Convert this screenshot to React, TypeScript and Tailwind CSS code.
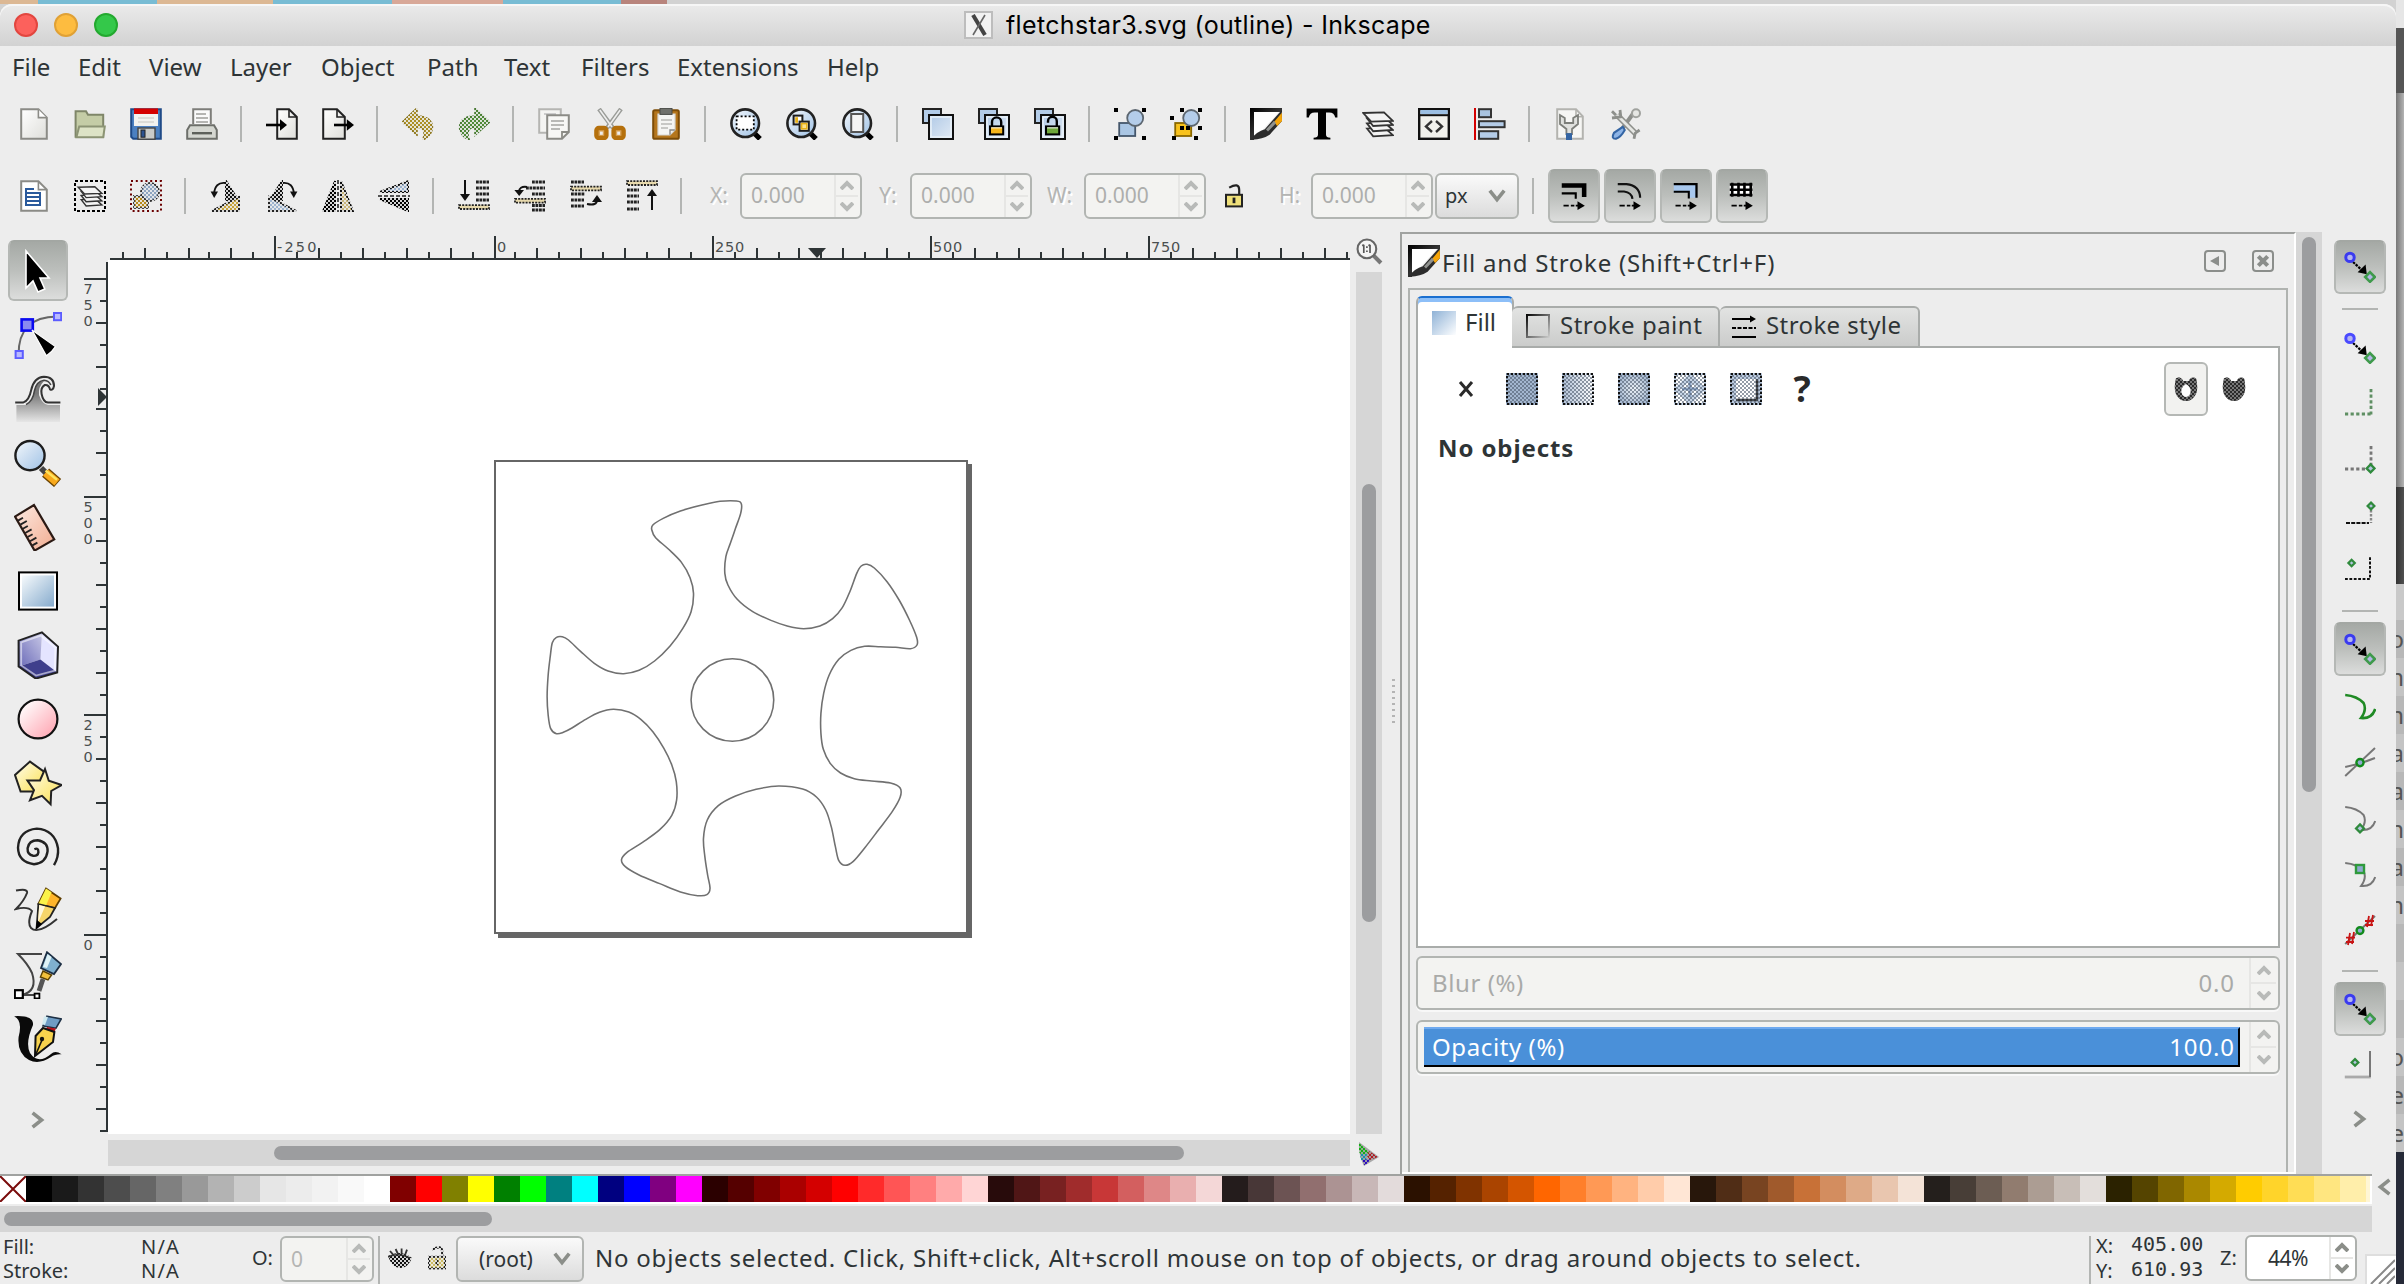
import React from "react";

type Kids = { children?: React.ReactNode };

/* ---------- shared pieces ---------- */

function Ic({ children, dim, cls }: Kids & { dim?: boolean; cls?: string }) {
  return (
    <svg viewBox="0 0 16 16" className={cls ?? "h-8 w-8 shrink-0"} fill="none">
      <g mask={dim ? "url(#stipple)" : undefined}>{children}</g>
    </svg>
  );
}

function Cell({ children }: Kids) {
  return <div className="flex w-14 shrink-0 items-center justify-center">{children}</div>;
}

function Sep() {
  return (
    <div className="flex w-6 shrink-0">
      <div className="ml-[10px] h-9 w-[2px] bg-[#b3b5b3]" />
    </div>
  );
}

function Spin({ tone, width }: { tone: string; width?: string }) {
  return (
    <div className={`flex h-full shrink-0 flex-col border-l-2 border-[#e6e6e4] pr-[2px] ${width ?? "w-[26px]"}`}>
      <div className="flex flex-1 items-center justify-center border-b-2 border-[#e6e6e4]">
        <svg viewBox="0 0 14 10" className="h-[10px] w-[14px]" fill="none" stroke={tone} strokeWidth="4">
          <path d="M1 9L7 3L13 9" />
        </svg>
      </div>
      <div className="flex flex-1 items-center justify-center">
        <svg viewBox="0 0 14 10" className="h-[10px] w-[14px]" fill="none" stroke={tone} strokeWidth="4">
          <path d="M1 1L7 7L13 1" />
        </svg>
      </div>
    </div>
  );
}

function NumberField({ label, lw, value, width }: { label: string; lw: string; value: string; width: string }) {
  return (
    <div className="flex items-center">
      <span className={`text-[21px] text-[#b4b5b3] [text-shadow:2px_2px_0_#fff] ${lw}`}>{label}</span>
      <div className={`flex h-[46px] items-center rounded-md border-2 border-[#b2b5b2] bg-[#f3f3f1] ${width}`}>
        <span className="flex-1 pl-[9px] text-[21px] text-[#adaeac]">{value}</span>
        <Spin tone="#b8bab8" />
      </div>
    </div>
  );
}

function Chevron({ d, cls }: { d: string; cls: string }) {
  return (
    <svg viewBox="0 0 20 20" className={cls} fill="none" stroke="#8b8e89" strokeWidth="4">
      <path d={d} />
    </svg>
  );
}

/* ---------- command bar icons ---------- */

const NewIcon = () => (
  <Ic>
    <path d="M1.6 .6H10.2L14.4 4.8V15.4H1.6Z" fill="url(#paper)" stroke="#8b8b86" />
    <path d="M10.2 .8V4.8H14.2" fill="#fff" stroke="#8b8b86" strokeWidth=".8" />
  </Ic>
);
const OpenIcon = () => (
  <Ic>
    <path d="M.8 14.4V1.6H6L7 3.4H14.6V14.4Z" fill="#c4cca6" stroke="#7f8669" />
    <path d="M2.6 9.2H15.4L14.6 14.6H1.2Z" fill="#dde3c6" stroke="#8c9474" />
  </Ic>
);
const SaveIcon = () => (
  <Ic>
    <path d="M.6 .6H15.4V15.4H1.6L.6 14.4Z" fill="#4b80c1" stroke="#1f4a87" />
    <rect x="2" y=".2" width="12" height="3" fill="#d40000" />
    <rect x="2" y="3" width="12" height="6" fill="#f2f2ef" />
    <path d="M4 5H12M4 7H12" stroke="#dcdcd8" />
    <rect x="4" y="10" width="8.5" height="5.6" fill="#c9cbc9" stroke="#444" strokeWidth=".7" />
    <rect x="5.5" y="11" width="2" height="3.6" fill="#2b5290" stroke="#222" strokeWidth=".5" />
  </Ic>
);
const PrintIcon = () => (
  <Ic>
    <path d="M3.6 8V.6H12.4V8" fill="#fafafa" stroke="#7d7d79" />
    <path d="M5 3H10M5 5H11M5 7H11" stroke="#b5b5b2" />
    <path d="M2 8.6H14L15.4 11V15.4H.6V11Z" fill="#d5d7d1" stroke="#6d6f6a" />
    <path d="M3 12.6H13" stroke="#5d605a" strokeWidth="1.2" />
  </Ic>
);
const ImportIcon = () => (
  <Ic>
    <path d="M5.6 .6H11.5L15.4 4.5V15.4H5.6Z" fill="url(#paper)" stroke="#222" />
    <path d="M11.5 .6V4.5H15.4" stroke="#222" strokeWidth=".8" />
    <path d="M0 8.5H8" stroke="#000" strokeWidth="1.3" />
    <path d="M7 5.6L10.5 8.5L7 11.4Z" fill="#000" />
  </Ic>
);
const ExportIcon = () => (
  <Ic>
    <path d="M.6 .6H7.5L11.4 4.5V15.4H.6Z" fill="url(#paper)" stroke="#222" />
    <path d="M7.5 .6V4.5H11.4" stroke="#222" strokeWidth=".8" />
    <path d="M6 8.5H13" stroke="#000" strokeWidth="1.3" />
    <path d="M12.4 5.6L16 8.5L12.4 11.4Z" fill="#000" />
  </Ic>
);
const UndoIcon = () => (
  <Ic dim>
    <path d="M7.5 0L.2 7L7.5 13.6V9.6C11 9.6 11.8 12 10.4 16C15 14 16.6 9 13.8 6C12.2 4.3 10 4 7.5 4Z" fill="#ab8f24" stroke="#8f7a24" strokeWidth=".8" />
  </Ic>
);
const RedoIcon = () => (
  <Ic dim>
    <path d="M8.5 0L15.8 7L8.5 13.6V9.6C5 9.6 4.2 12 5.6 16C1 14 -.6 9 2.2 6C3.8 4.3 6 4 8.5 4Z" fill="#4f8a38" stroke="#4a7a34" strokeWidth=".8" />
  </Ic>
);
const CopyIcon = () => (
  <Ic>
    <path d="M.6 .6H11.4V12.4H.6Z" fill="#f4f4f2" stroke="#b5b5b2" />
    <path d="M3 3H9" stroke="#ccc" />
    <path d="M4.6 3.6H15.4V12L12 15.4H4.6Z" fill="#f7f7f5" stroke="#8b8b86" />
    <path d="M6.5 6.5H13M6.5 8.5H13M6.5 10.5H11" stroke="#b9b9b6" strokeWidth=".9" />
    <path d="M12 15.2V12H15.2" stroke="#8b8b86" strokeWidth=".9" />
  </Ic>
);
const CutIcon = () => (
  <Ic>
    <path d="M2.5 .5L9.5 10M13.5 .5L6.5 10" stroke="#9a9c98" strokeWidth="2.2" />
    <path d="M2.9 1L9 9.5M13.1 1L7 9.5" stroke="#eee" strokeWidth=".8" />
    <rect x="1.2" y="10" width="5" height="5" rx="1.2" fill="#d8a45c" stroke="#b5700c" strokeWidth="2.2" />
    <rect x="9.8" y="10" width="5" height="5" rx="1.2" fill="#d8a45c" stroke="#b5700c" strokeWidth="2.2" />
    <rect x="3" y="11.8" width="1.4" height="1.6" fill="#ededed" />
    <rect x="11.6" y="11.8" width="1.4" height="1.6" fill="#ededed" />
  </Ic>
);
const PasteIcon = () => (
  <Ic>
    <rect x="1.6" y="1.1" width="12.8" height="14.3" rx=".8" fill="#b5761d" stroke="#7d4c07" />
    <path d="M4 3H12.5V11L10 13.5H4Z" fill="#f5f5f3" stroke="#d8d8d5" strokeWidth=".6" />
    <path d="M5.5 6H11M5.5 8H11M5.5 10H9" stroke="#b9b9b6" strokeWidth=".8" />
    <rect x="5" y=".2" width="6" height="3" fill="#6f716c" stroke="#4a4c48" strokeWidth=".5" />
    <path d="M10 13.4V11H12.4" stroke="#888" strokeWidth=".7" />
  </Ic>
);
const Lens = ({ children }: Kids) => (
  <Ic>
    <path d="M11.5 12L15 15.4" stroke="#000" strokeWidth="2.6" />
    <circle cx="7.6" cy="7.6" r="6.9" fill="url(#glass)" stroke="#222" strokeWidth="1.3" />
    {children}
  </Ic>
);
const ZoomSel = () => (
  <Lens>
    <rect x="3.3" y="4.2" width="8.6" height="6.6" fill="#fff" stroke="#000" strokeDasharray="1 1" strokeWidth=".9" />
  </Lens>
);
const ZoomDraw = () => (
  <Lens>
    <rect x="3.8" y="3.8" width="4.4" height="4.4" fill="#fff" stroke="#1c1c1c" />
    <rect x="4.6" y="4.6" width="1.4" height="2.8" fill="#e9b116" />
    <rect x="6.8" y="6.8" width="4.6" height="4.6" fill="#fff" stroke="#1c1c1c" />
    <rect x="7.8" y="7.8" width="2.6" height="2.6" fill="#fde08a" stroke="#e9b116" strokeWidth=".8" />
  </Lens>
);
const ZoomPage = () => (
  <Lens>
    <rect x="4.6" y="3" width="6" height="9" fill="#f4f4f4" stroke="#555" />
  </Lens>
);
const Dup = ({ children }: Kids) => (
  <Ic>
    <rect x=".5" y=".5" width="9" height="7" fill="#b3cce8" stroke="#222" />
    <rect x="3.5" y="3.5" width="12" height="12" fill="url(#blue)" stroke="#111" />
    <rect x="4.5" y="4.5" width="10" height="10" stroke="#e8f0f8" strokeWidth=".8" />
    {children}
  </Ic>
);
const Lock = ({ color, open }: { color: string; open?: boolean }) => (
  <g>
    <path d={open ? "M7 7.4V6.6A2.2 2.2 0 0 1 11.4 6.6V9" : "M7 9.5V7A2.3 2.3 0 0 1 11.6 7V9.5"} stroke="#000" strokeWidth="1.2" />
    <rect x="6" y="9.2" width="6.6" height="4" fill={color} stroke="#000" />
    <path d="M6.600 9.900H12" stroke="#fff" strokeOpacity=".7" strokeWidth=".7" />
  </g>
);
const Group = ({ un }: { un?: boolean }) => (
  <Ic>
    <rect x="2.6" y="7.5" width="8" height="6.5" fill={un ? "#f8c21c" : "#aac6e4"} stroke={un ? "#8a6800" : "#44566b"} strokeWidth=".9" />
    <circle cx="10.6" cy="5" r="4" fill="#b4cdea" stroke="#5c6670" strokeWidth=".9" />
    {(un
      ? [[5, 0], [14, 0], [0, 4], [5, 9], [8, 9], [14, 9], [1, 14], [12, 14]]
      : [[0, 0], [14, 0], [0, 14], [14, 14]]
    ).map(([x, y]) => (
      <rect key={`${x}-${y}`} x={x} y={y} width="2" height="2" fill="#000" />
    ))}
  </Ic>
);
const FillStroke = ({ cls }: { cls?: string }) => (
  <Ic cls={cls}>
    <path d="M0 0H16V2H2V16H0Z" fill="url(#ink)" />
    <path d="M2 2H14.500L2 15.500Z" fill="#fff" />
    <path d="M15.900 1L7.400 10.600Q3.500 11.600 .2 15.800Q6 16 9.800 13.400L16 6.500Z" fill="#2c2c2c" />
    <path d="M15.900 2.400L12 7L13.600 9L16 6.500Z" fill="#f5a50a" />
    <path d="M8 10.800L12 6.400L13 7.600L9 11.800Z" fill="#8f918e" />
  </Ic>
);
const TextIcon = () => (
  <Ic>
    <path d="M.3 .3H15.7V4.8H14.6Q14.2 2.2 11.6 2.2H10V13.2Q10 14.8 12.2 14.9V15.8H3.8V14.9Q6 14.8 6 13.2V2.2H4.4Q1.8 2.2 1.4 4.8H.3Z" fill="#000" />
  </Ic>
);
const Layers = () => (
  <g stroke="#333" strokeWidth=".9" fill="#f4f4f4">
    <path d="M2.5 10.3L11 9.6L15.4 13.6L5.6 14.2Z" />
    <path d="M2.5 7.7L11 7L15.4 11L5.6 11.6Z" />
    <path d="M2.5 5.1L11 4.4L15.4 8.4L5.6 9Z" />
    <path d="M.6 2.5L11 2.2L15.4 6.4L4.6 6.8Z" />
  </g>
);
const XmlIcon = () => (
  <Ic>
    <rect x=".6" y=".6" width="14.8" height="14.8" fill="#f1f1ec" stroke="#111" strokeWidth="1.2" />
    <rect x="1.2" y="1" width="13.6" height="2" fill="#9cbfe2" />
    <path d="M1 3.6H15" stroke="#111" />
    <path d="M7 6.5L4 9.2L7 12M9 6.5L12 9.2L9 12" stroke="#333" strokeWidth="1.2" />
  </Ic>
);
const AlignIcon = () => (
  <Ic>
    <path d="M.5 0V16" stroke="#d40000" />
    <rect x="2.5" y=".6" width="6" height="4" fill="#a9c3df" stroke="#333" />
    <rect x="2.5" y="6.6" width="12.8" height="3" fill="#b4cce8" stroke="#333" />
    <rect x="2.5" y="11.6" width="9.6" height="3.8" fill="#b4cce8" stroke="#333" />
  </Ic>
);
const DocPrefs = () => (
  <Ic>
    <path d="M1.6 .6H11L14.4 4.2V15.4H1.6Z" fill="#f6f6f4" stroke="#b3b3af" />
    <path d="M11 .8V4.400H14.200" stroke="#b3b3af" strokeWidth=".8" />
    <path d="M3 3.500V8L6.200 10.500V13H9V10.500L12 8V3.500L9.600 5V7.500H5.400V5Z" fill="#e0e1de" stroke="#7d7f7a" strokeWidth=".9" />
    <rect x="6" y="12.6" width="3" height="3.4" fill="#3465a4" />
  </Ic>
);
const Prefs = () => (
  <Ic>
    <path d="M12.5 1.5L6 10.5" stroke="#8d8f8b" strokeWidth="2" />
    <path d="M3.5 3.5L13 13" stroke="#8d8f8b" strokeWidth="3" />
    <path d="M3.5 3.5L13 13" stroke="#e6e7e4" strokeWidth="1.4" />
    <path d="M1 1.6L3 3.6M5 1L5.4 4.4L1 5" stroke="#8d8f8b" strokeWidth="1.4" />
    <path d="M14.8 11L12.6 12.6L12 15.4" stroke="#8d8f8b" strokeWidth="1.4" />
    <circle cx="13" cy="2.6" r="2" fill="#e6e7e4" stroke="#a0a29e" />
    <path d="M6.4 9.4L2 12.4Q.4 15.6 3 15.4Q5.4 14.6 7.4 11Z" fill="#8db4e6" stroke="#3465a4" />
  </Ic>
);

/* ---------- tool control icons ---------- */

const SelAll = () => (
  <Ic>
    <path d="M1.6 .6H10.2L14.4 4.8V15.4H1.6Z" fill="#fff" stroke="#8b8b86" />
    <path d="M10.2 .8V4.8H14.2" stroke="#8b8b86" strokeWidth=".8" />
    <path d="M3.5 4.5H8M3.5 6.5H11.5M3.5 8.5H11.5M3.5 10.5H11.5M3.5 12.5H11.5M4 4V13M11 6V13" stroke="#2a5a9c" />
  </Ic>
);
const SelLayers = () => (
  <Ic>
    <rect x=".5" y=".5" width="15" height="15" stroke="#000" strokeDasharray="1.5 1" />
    <g transform="translate(1.6 1.6) scale(.8)">
      <Layers />
    </g>
  </Ic>
);
const Desel = () => (
  <Ic>
    <rect x=".5" y=".5" width="15" height="15" stroke="#6b0000" strokeDasharray="1 1.4" />
    <g mask="url(#stipple)">
      <path d="M2 8H9V14H2Z" fill="#b58a1c" stroke="#444" />
      <circle cx="10" cy="6" r="4.5" fill="#8da4bf" stroke="#333" />
    </g>
  </Ic>
);
const RotL = () => (
  <Ic>
    <g mask="url(#stipple)">
      <path d="M8 .5V10L14 10Z" fill="#111" stroke="#111" />
      <path d="M1 15.5L14.5 8.5L14.5 15.5Z" fill="#c5a33a" stroke="#222" />
    </g>
    <path d="M7.5 1.5Q2.5 1 2 7" stroke="#111" strokeWidth=".9" />
    <path d="M.3 5.8H4L2.1 9Z" fill="#111" />
  </Ic>
);
const RotR = () => (
  <Ic>
    <g mask="url(#stipple)">
      <path d="M8 .5V10L2 10Z" fill="#111" stroke="#111" />
      <path d="M15 15.5L1.5 8.5L1.5 15.5Z" fill="#9db4cf" stroke="#222" />
    </g>
    <path d="M8.5 1.5Q13.5 1 14 7" stroke="#111" strokeWidth=".9" />
    <path d="M15.7 5.8H12L13.9 9Z" fill="#111" />
  </Ic>
);
const FlipH = () => (
  <Ic>
    <g mask="url(#stipple)">
      <path d="M6.5 .5V15.5H.6Z" fill="#000" stroke="#000" />
      <path d="M9.5 .5V15.5H15.4Z" fill="#c9b57a" stroke="#111" />
    </g>
    <path d="M8 0V16" stroke="#222" strokeDasharray="2 1" strokeWidth=".8" />
  </Ic>
);
const FlipV = () => (
  <Ic>
    <g mask="url(#stipple)">
      <path d="M15 9.5V15.5L1 9.5Z" fill="#000" stroke="#000" />
      <path d="M15 6V.6L1 6Z" fill="#99b0cc" stroke="#111" />
    </g>
    <path d="M0 8H16" stroke="#222" strokeDasharray="2 1" strokeWidth=".8" />
  </Ic>
);
const Stack = ({ bars, arrow, head, gold }: { bars: number[][]; arrow: string; head: string; gold: number[] }) => (
  <Ic>
    {bars.map(([x, y, w]) => (
      <path key={`${x}-${y}`} d={`M${x} ${y}h${w}`} stroke="#222" strokeWidth="1.5" strokeDasharray="1.4 .35" />
    ))}
    <path d={`M${gold[0]} ${gold[1]}h${gold[2]}v1.9h-${gold[2]}z`} fill="#e7d9ad" stroke="#222" strokeWidth=".9" strokeDasharray="1 .6" />
    <path d={arrow} stroke="#111" strokeWidth="1" />
    <path d={head} fill="#111" />
  </Ic>
);
const Padlock = ({ dim }: { dim?: boolean }) => (
  <svg viewBox="0 0 10 12" className="h-6 w-5" fill="none">
    <g mask={dim ? "url(#stipple)" : undefined}>
      <path d="M2.6 1.8Q7.6 -1 7.6 3V6" stroke="#222" strokeWidth="1.1" />
      <rect x="1" y="5.4" width="8" height="5.8" fill={dim ? "#cdbb63" : "#efe07a"} stroke="#222" />
      <path d="M5 6.8V9.6" stroke="#222" strokeWidth="1.4" />
    </g>
  </svg>
);

function Pressed({ children }: Kids) {
  return (
    <div className="flex h-[54px] w-[52px] shrink-0 items-center justify-center rounded-md border-2 border-[#b5b8b5] border-t-[#a3a7a3] bg-linear-to-b from-[#a5a9a5] via-[#bcbfbc] to-[#dcdddc]">
      {children}
    </div>
  );
}

const AffectArrow = () => (
  <>
    <path d="M2 13.5H5M6.2 13.5H8.2M9 13.5H12" stroke="#000" strokeWidth="1" />
    <path d="M10 11L14.2 13.5L10 16Z" fill="#000" />
  </>
);
const affectIcons = [
  <Ic key="stroke" cls="h-7 w-7">
    <path d="M1 2H13.8V8.5" stroke="#000" strokeWidth="2.6" />
    <path d="M1 6.5H9V9.5" stroke="#000" strokeWidth="1.2" />
    <AffectArrow />
  </Ic>,
  <Ic key="corner" cls="h-7 w-7">
    <path d="M1 1.2H6Q13.6 2 13.8 9" stroke="#111" strokeWidth="1.2" />
    <path d="M1 5.4H4.6Q9 6 9.4 9.6" stroke="#111" strokeWidth="1.2" />
    <AffectArrow />
  </Ic>,
  <Ic key="gradient" cls="h-7 w-7">
    <path d="M1 1.2H14V9H9.6V6H1Z" fill="#a8c8ee" />
    <path d="M1 1.2H14V9" stroke="#000" strokeWidth="1.3" />
    <path d="M1 5.6H9.6V9.4" stroke="#000" strokeWidth="1.2" />
    <AffectArrow />
  </Ic>,
  <Ic key="pattern" cls="h-7 w-7">
    <rect x="1" y=".8" width="13" height="7.4" fill="#fff" />
    <path d="M1 1.4H14M1 4.4H14M1 7.4H14M2.4 .4V8.4M6 .4V8.4M9.4 .4V8.4M13 .4V8.4" stroke="#000" strokeWidth="1.5" />
    <AffectArrow />
  </Ic>,
];

/* ---------- toolbox ---------- */

function Tool({ children }: Kids) {
  return (
    <div className="flex h-16 w-[60px] items-center justify-center">
      <svg viewBox="0 0 24 24" className="h-12 w-12" fill="none">
        {children}
      </svg>
    </div>
  );
}

const tools = [
  <Tool key="node">
    <path d="M2.3 22Q2 3 21.6 2.8" stroke="#666" />
    <rect x=".8" y="20" width="3.6" height="3.6" fill="#b9b9ff" stroke="#5c5cff" />
    <rect x="20" y="1" width="3.6" height="3.6" fill="#b9b9ff" stroke="#5c5cff" />
    <rect x="3.8" y="4.2" width="5.6" height="5.6" fill="#8a8af0" stroke="#0a0af0" strokeWidth="1.3" />
    <path d="M9 9.5L20.7 17.8Q19 20.6 16.2 22.4Z" fill="#000" stroke="#fff" strokeWidth=".6" />
  </Tool>,
  <Tool key="tweak">
    <path d="M1.200 15H6Q9.500 13 10 8Q11.500 3 15 3Q12 6 12.500 10Q14 14.500 17 15H23V23.500H1.200Z" fill="url(#wave)" />
    <path d="M.6 13.800H4.500Q7.500 13 8.600 7.500Q10 1.200 15 .9Q20 1 20 5.500Q19.500 8 18 7.200Q17.500 4.800 15.400 5Q13.200 6.200 13.800 9.500Q14.600 13.600 17 13.800H23.200" stroke="#333" strokeWidth="1" />
    <path d="M6 14.800Q9.500 13 10.200 8Q11 3.200 15 2.600Q17.500 2.800 18.400 5" stroke="#444" strokeWidth=".8" />
  </Tool>,
  <Tool key="zoom">
    <path d="M13.5 14.5L16 17" stroke="#444" strokeWidth="3" />
    <path d="M15.8 16.8L21.8 22" stroke="#6b4300" strokeWidth="5.4" />
    <path d="M15.8 16.8L21.5 21.7" stroke="#f8a91c" strokeWidth="4" />
    <path d="M15.8 15.8L21.5 20.4" stroke="#ffe45c" strokeWidth="1.2" />
    <circle cx="8" cy="8.3" r="7.3" fill="url(#glass)" stroke="#1d1d1d" strokeWidth="1.2" />
  </Tool>,
  <Tool key="measure">
    <path d="M10 1L20.1 18.2L10.3 23.800L.5 6.8Z" fill="url(#peach)" stroke="#2b1a14" strokeWidth="1.1" />
    <path d="M2 8.8L4.5 7.4M3.2 10.8L6.4 9M4.4 12.9L6.9 11.5M5.6 15L8.8 13.2M6.8 17L9.3 15.6M8 19.1L11.2 17.3M9.2 21.2L11.7 19.8" stroke="#222" strokeWidth=".9" />
  </Tool>,
  <Tool key="rect">
    <rect x="2.5" y="2.7" width="19" height="18.6" fill="#fff" stroke="#000" />
    <rect x="4" y="4.2" width="16" height="15.6" fill="url(#blue2)" />
  </Tool>,
  <Tool key="box">
    <path d="M14 .7L22 7.8L21.6 20.7L13.2 14.2Z" fill="#e4e4ff" />
    <path d="M14 .7L2.3 4.8V17.8L13.2 14.2Z" fill="url(#violet)" />
    <path d="M13.2 14.2L21.6 20.7L10.9 23.8L2.3 17.8Z" fill="#3f3f8c" />
    <path d="M13.300 2.300L3.600 5.700V17.200L11 22.300L20.400 19.800L20.700 8.300Z" stroke="#fff" strokeOpacity=".55" strokeWidth=".9" />
    <path d="M14 .7L22 7.8L21.6 20.7L10.9 23.8L2.3 17.8V4.8Z" stroke="#222" />
  </Tool>,
  <Tool key="ellipse">
    <circle cx="12" cy="12" r="9.7" fill="url(#pink)" stroke="#111" strokeWidth="1.1" />
  </Tool>,
  <Tool key="star">
    <path d="M8 1.3L15.5 6.7L12 16.3H3.3L.5 8Z" fill="url(#yellow)" stroke="#222" />
    <path d="M15.5 5L17.4 10.9L23.8 13L18.6 16L18.3 22.6L14 18.4L8 20.6L10 15.6L6.7 10.7L13 10.7Z" fill="url(#yellow)" stroke="#222" />
  </Tool>,
  <Tool key="spiral">
    <path d="M10.8 12.5Q12.8 11.5 12.8 14Q12.5 16 10.2 15.8Q7.2 15.2 7.4 12Q8 8 12.4 8Q17.6 8.8 17.4 13.5Q16.6 19.6 10.6 20Q2.8 19 2.6 11.8Q3 3 12 2.2Q21 2.8 22.6 12Q23 16.5 20.6 20.5" transform="translate(-.6 .6)" stroke="#222" strokeWidth="1.2" />
  </Tool>,
  <Tool key="pencil">
    <path d="M1 1.8Q7 .5 6.5 3Q5 7 1 11Q7 9.5 9 12Q6.5 18 8.5 20.5Q12 24 21.500 16" stroke="#333" />
    <path d="M16 .8L23.3 5.8L20.5 10.5L12.2 8.5Z" fill="#ffb52b" stroke="#5d3c00" strokeWidth=".9" />
    <path d="M16 .8L18.8 2.6L16 9.4L12.2 8.5Z" fill="#fbf34a" />
    <path d="M12.2 8.5L20.5 10.5L18 15L11.3 20.5Z" fill="#f7d66a" stroke="#222" strokeWidth=".9" />
    <path d="M12.6 9L15.5 9.7L12 18Z" fill="#fff7dd" />
    <path d="M11.5 16.5L14 18.5L10.8 21.5Z" fill="#000" />
  </Tool>,
  <Tool key="bezier">
    <path d="M14 1.5H2Q7 6.5 9 11Q12 20 4 22H11" stroke="#444" />
    <path d="M16.5 .6L23.5 6.5L20 11.5L13.5 8.5Z" fill="#7fb0cf" stroke="#1d2f44" strokeWidth=".9" />
    <path d="M16.8 1.5L18.8 3L16.5 8.5L14.5 8Z" fill="#dff3f7" />
    <path d="M14.5 10L18.8 12L17 14.5L13.2 13Z" fill="#f3c13c" stroke="#5d4200" strokeWidth=".7" />
    <path d="M14.5 14L12.5 20" stroke="#555" strokeWidth="2.4" />
    <rect x=".4" y="19.6" width="4" height="4" fill="#fff" stroke="#000" strokeWidth="1.1" />
    <rect x="10.3" y="21.3" width="2.4" height="2.4" fill="#fff" stroke="#000" strokeWidth=".9" />
  </Tool>,
  <Tool key="calligraphy">
    <path d="M0 .6Q10 0 9.5 5Q5.5 14 8 19Q12 25 18.5 19.5Q20.5 17.5 23.8 19.6Q20.5 19.4 18.5 21Q12.5 25 7.5 22.5Q1.5 19 2.3 11Q4.5 2.5 0 .6Z" fill="#0a0a0a" />
    <path d="M16.5 .6L23.6 2L21 6.6L14.5 5.5Z" fill="#6f9cc4" stroke="#1d2f44" strokeWidth=".8" />
    <path d="M15 .8L17 1L15.5 5L14 4.8Z" fill="#cfe9f0" />
    <path d="M16.5 6L21 6.8L20 9L16 8Z" fill="#b5121b" />
    <path d="M14.5 6.5L20.2 8.5L19.5 13.5L10.5 20.5L10.8 10.5Z" fill="#f7d24d" stroke="#111" strokeWidth="1" />
    <path d="M10.8 20L14 12.5" stroke="#111" strokeWidth=".8" />
    <circle cx="14" cy="12" r="1.1" fill="#111" />
  </Tool>,
];

/* ---------- rulers and canvas ---------- */

const STEP = 21.85;
const snap = (v: number) => Math.floor(v / 2) * 2;

function HRuler() {
  const ks = Array.from({ length: 57 }, (_, i) => i - 17);
  return (
    <svg viewBox="108 232 1242 28" className="h-7 w-[1242px]">
      <rect x="110" y="258" width="1240" height="2" fill="#2e3436" />
      {ks.map((k) => {
        const top = k % 10 === 0 ? 236 : k % 2 === 0 ? 248 : 252;
        return <rect key={k} x={snap(494 + STEP * k)} y={top} width="2" height={260 - top} fill="#2e3436" />;
      })}
      {[-10, 0, 10, 20, 30].map((k) => (
        <text
          key={k}
          x={snap(494 + STEP * k) + 3}
          y="252"
          fontSize="14.500"
          letterSpacing={k < 0 ? 2.2 : 0.8}
          fill="#4a4f50"
          className="font-['DejaVu_Sans',sans-serif]"
        >
          {k * 25}
        </text>
      ))}
      <path d="M808 248H826L817 258Z" fill="#2e3436" />
    </svg>
  );
}

function VRuler() {
  const ks = Array.from({ length: 40 }, (_, i) => 30 - i);
  return (
    <svg viewBox="80 260 28 874" className="h-[874px] w-7">
      <rect x="106" y="262" width="2" height="870" fill="#2e3436" />
      {ks.map((k) => {
        const left = k % 10 === 0 ? 84 : k % 2 === 0 ? 96 : 100;
        return <rect key={k} x={left} y={snap(934.4 - STEP * k)} width={108 - left} height="2" fill="#2e3436" />;
      })}
      {[30, 20, 10, 0].map((k) =>
        String(k * 25)
          .split("")
          .map((c, i) => (
            <text key={`${k}-${i}`} x="83.500" y={snap(934 - STEP * k) + 16 + i * 16} fontSize="14.500" fill="#4a4f50" className="font-['DejaVu_Sans',sans-serif]">
              {c}
            </text>
          ))
      )}
      <path d="M98 388V406L107 397Z" fill="#2e3436" />
    </svg>
  );
}

const outline: number[][] = [
  [557, 300], [560, 285], [590, 265], [640, 243], [700, 226], [755, 214], [803, 213], [817, 222], [815, 250], [800, 295], [785, 340],
  [772, 380], [769, 430], [778, 465], [805, 508], [850, 545], [905, 572], [950, 588], [998, 596], [1045, 588], [1082, 566],
  [1110, 533], [1132, 485], [1152, 430], [1165, 408], [1182, 403], [1203, 414], [1240, 455], [1275, 510], [1305, 570], [1326, 622],
  [1327, 645], [1308, 656], [1265, 652], [1220, 650], [1175, 649], [1135, 661], [1100, 688], [1072, 735], [1056, 790], [1048, 850],
  [1048, 910], [1055, 958], [1075, 1000], [1105, 1029], [1145, 1046], [1195, 1053], [1250, 1059], [1278, 1074], [1278, 1102],
  [1255, 1145], [1215, 1200], [1175, 1254], [1142, 1294], [1118, 1306], [1100, 1292], [1090, 1250], [1078, 1190], [1062, 1140],
  [1035, 1101], [995, 1077], [925, 1068], [860, 1078], [800, 1098], [750, 1127], [718, 1170], [707, 1225], [711, 1280], [719, 1335],
  [726, 1375], [717, 1394], [690, 1397], [640, 1386], [580, 1361], [520, 1335], [480, 1310], [469, 1289], [485, 1267], [530, 1237],
  [580, 1199], [615, 1156], [629, 1110], [628, 1055], [615, 1005], [592, 955], [560, 905], [525, 868], [490, 846], [445, 838],
  [405, 847], [365, 868], [325, 894], [300, 907], [280, 911], [263, 895], [256, 855], [253, 800], [256, 735], [262, 680],
  [268, 638], [280, 622], [297, 620], [315, 630], [350, 664], [390, 700], [430, 723], [475, 731], [520, 721], [565, 693],
  [610, 648], [647, 595], [671, 545], [678, 490], [668, 443], [643, 397], [605, 357], [568, 323],
];

function smooth(pts: number[][]) {
  const n = pts.length;
  let d = `M${pts[0][0]} ${pts[0][1]}`;
  for (let i = 0; i < n; i++) {
    const [a, b, c, e] = [pts[(i + n - 1) % n], pts[i], pts[(i + 1) % n], pts[(i + 2) % n]];
    d += `C${b[0] + (c[0] - a[0]) / 6} ${b[1] + (c[1] - a[1]) / 6} ${c[0] - (e[0] - b[0]) / 6} ${c[1] - (e[1] - b[1]) / 6} ${c[0]} ${c[1]}`;
  }
  return d + "Z";
}

function Canvas() {
  return (
    <svg viewBox="108 260 1242 874" className="h-[874px] w-[1242px] bg-white" fill="none">
      <path d="M968 464H972V938H498V934H968Z" fill="#666" />
      <rect x="495" y="461" width="472" height="472" stroke="#666" strokeWidth="2" fill="#fff" />
      <g transform="translate(460 430) scale(.34439 .33333)" stroke="#707070" strokeWidth="4.6">
        <path d={smooth(outline)} />
        <ellipse cx="791" cy="810" rx="120" ry="123.5" />
      </g>
    </svg>
  );
}

/* ---------- snap bar ---------- */

const SnapMain = ({ soft }: { soft?: boolean }) => (
  <Ic>
    <path d="M4.5 5.5L10 10.5" stroke="#000" strokeWidth="1.1" strokeDasharray="1.3 .5" />
    <path d="M11.4 11.6L6.8 10.6L10.8 6.8Z" fill="#000" />
    <circle cx="3" cy="3.2" r="2.1" fill="#b4b4f0" stroke={soft ? "#4a4aff" : "#3a3af0"} strokeWidth="1.5" />
    <path d="M13 10.6L15.4 13L13 15.4L10.6 13Z" fill="#b4b4e6" stroke="#3f9a4c" strokeWidth="1.3" />
  </Ic>
);
const Node = ({ x, y, s = 1.5 }: { x: number; y: number; s?: number }) => (
  <path d={`M${x} ${y - s}L${x + s} ${y}L${x} ${y + s}L${x - s} ${y}Z`} fill="#b4c4e0" stroke="#2f8a3c" strokeWidth="1.1" />
);
const curve = "M.6 2.5Q6.5 3 9.8 6.5Q11.5 10 8.5 14Q14 14.5 15.6 9.5";

function SnapCell({ h, children }: Kids & { h: string }) {
  return <div className={`flex w-full shrink-0 items-center justify-center ${h}`}>{children}</div>;
}
const SnapSep = () => <div className="h-[2px] w-9 shrink-0 bg-[#b3b5b3]" />;

function SnapBar() {
  return (
    <div className="flex w-[74px] shrink-0 flex-col items-center pt-2 pl-[2px]">
      <Pressed><SnapMain /></Pressed>
      <SnapCell h="h-[14px]" />
      <SnapSep />
      <SnapCell h="h-[18px]" />
      <SnapCell h="h-[40px]"><SnapMain soft /></SnapCell>
      <SnapCell h="h-[66px]">
        <Ic><path d="M.5 14.5H14M13.5 2V15" stroke="#5f8f63" strokeDasharray="1.6 1.2" strokeWidth="1.4" /></Ic>
      </SnapCell>
      <SnapCell h="h-[47px]">
        <Ic><path d="M.5 13.5H12M13.5 2V12" stroke="#777" strokeDasharray="1.6 1.2" strokeWidth="1.4" /><Node x={13.3} y={13.2} s={2} /></Ic>
      </SnapCell>
      <SnapCell h="h-[62px]">
        <Ic><path d="M1 13.5H12.5" stroke="#111" strokeDasharray="2 .6" strokeWidth="1" /><path d="M13.5 5V13.5" stroke="#888" strokeDasharray="1.2 .8" strokeWidth="1.2" /><Node x={13.5} y={5} s={1.7} /></Ic>
      </SnapCell>
      <SnapCell h="h-[50px]">
        <Ic><path d="M.5 13.5H13V2" stroke="#111" strokeDasharray="1.4 .8" strokeWidth="1" /><Node x={3.8} y={5.5} s={1.6} /></Ic>
      </SnapCell>
      <SnapCell h="h-[17px]" />
      <SnapSep />
      <SnapCell h="h-[10px]" />
      <Pressed><SnapMain /></Pressed>
      <SnapCell h="h-[60px]"><Ic><path d={curve} stroke="#1f8a24" strokeWidth="1.3" /></Ic></SnapCell>
      <SnapCell h="h-[52px]">
        <Ic><path d="M.6 15L15.5 1M.6 10.5Q8 9 15.5 6" stroke="#777" /><circle cx="8" cy="8.3" r="1.8" fill="#8fa8d0" stroke="#128a1c" strokeWidth="1.2" /></Ic>
      </SnapCell>
      <SnapCell h="h-[60px]"><Ic><path d={curve} stroke="#777" /><Node x={8} y={13.2} s={2} /></Ic></SnapCell>
      <SnapCell h="h-[52px]"><Ic><path d={curve} stroke="#777" /><rect x="6" y="3.5" width="4" height="4" fill="#8fa8d0" stroke="#2f9a3c" strokeWidth="1.2" /></Ic></SnapCell>
      <SnapCell h="h-[60px]">
        <Ic>
          <path d="M.6 15L15.5 1" stroke="#777" />
          <path d="M1 11.8H5.5M1 14H5M3 9.5L2 15.5M5 9L4 15M10.5 3.5H15M10.5 5.5H14.5M12.5 1L11.5 6.5M14.5 .5L13.5 6" stroke="#c81414" strokeWidth=".9" />
          <circle cx="8" cy="8.3" r="1.7" fill="#8fa8d0" stroke="#128a1c" strokeWidth="1.2" />
        </Ic>
      </SnapCell>
      <SnapCell h="h-[10px]" />
      <SnapSep />
      <SnapCell h="h-[10px]" />
      <Pressed><SnapMain /></Pressed>
      <SnapCell h="h-[54px]">
        <Ic><path d="M.4 15H13.4" stroke="#aaa" strokeWidth="1.4" /><path d="M13 2V15" stroke="#777" /><Node x={5.5} y={7.7} s={1.7} /></Ic>
      </SnapCell>
      <SnapCell h="h-[58px]"><Chevron d="M4 2L14 10L4 18" cls="h-[18px] w-[18px]" /></SnapCell>
    </div>
  );
}

/* ---------- fill and stroke panel ---------- */

const Swatch = ({ fill, children }: Kids & { fill: string }) => (
  <Cell>
    <Ic>
      <rect width="16" height="16" fill={fill} />
      {children}
      <rect width="16" height="16" fill="url(#dots)" />
      <rect x=".5" y=".5" width="15" height="15" stroke="#111" strokeDasharray="1 1" />
    </Ic>
  </Cell>
);

const shieldPath = "M1 .6Q3.5 -.6 4.6 2H7.4Q8.5 -.6 11 .6Q12.600 7 10 10Q8.5 12 6 12Q3.5 12 2 10Q-.6 7 1 .6Z";

function PercentField({ label, value, active }: { label: string; value: string; active?: boolean }) {
  return (
    <div className="flex h-[54px] w-[864px] items-center rounded-md border-2 border-[#b2b5b2] bg-[#f3f3f1] pl-[6px] shadow-[0_2px_0_#f8f8f8]">
      {active ? (
        <div className="mr-[9px] flex h-10 flex-1 items-center justify-between border-t-2 border-r-2 border-b-2 border-t-[#6faaf0] border-r-black border-b-black bg-[#4a90d9] pr-[3px] pl-2 text-white">
          <span className="tracking-[.6px]">{label}</span>
          <span className="tracking-[.9px]">{value}</span>
        </div>
      ) : (
        <div className="mr-[9px] flex flex-1 items-center justify-between pr-[5px] pl-2 text-[#a9aaa8]">
          <span className="tracking-[.6px]">{label}</span>
          <span className="tracking-[.9px]">{value}</span>
        </div>
      )}
      <Spin tone="#b8bab8" width="w-[29px]" />
    </div>
  );
}

function Panel() {
  return (
    <div className="flex h-[942px] w-[896px] shrink-0 flex-col border-t-2 border-r-2 border-l-2 border-t-[#a0a2a0] border-r-white border-l-[#a0a2a0]">
      <div className="flex h-[54px] items-center pl-[6px]">
        <FillStroke />
        <span className="mt-[3px] ml-[2px] flex-1 tracking-[.75px]">Fill and Stroke (Shift+Ctrl+F)</span>
        <div className="mr-[26px] flex h-[22px] w-[22px] items-center justify-center rounded border-2 border-[#8b8e8b]">
          <svg viewBox="0 0 12 12" className="h-3 w-3"><path d="M10 1V11L1 6Z" fill="#8b8e8b" /></svg>
        </div>
        <div className="mr-[20px] flex h-[22px] w-[22px] items-center justify-center rounded border-2 border-[#8b8e8b]">
          <svg viewBox="0 0 12 12" className="h-[14px] w-[14px]"><path d="M2 2L10 10M10 2L2 10" stroke="#8b8e8b" strokeWidth="3.5" /></svg>
        </div>
      </div>
      <div className="mr-[6px] ml-[6px] flex flex-1 flex-col border-t-2 border-r-2 border-l-2 border-[#b0b3b0] pt-[6px] pl-[6px]">
        <div className="relative z-10 -mb-[2px] flex h-[52px] items-end">
          <div className="flex h-[52px] w-[98px] items-center rounded-t-md border-x-2 border-t-2 border-x-[#a9acaa] border-t-[#1a6fd0] bg-white pl-[14px] shadow-[inset_0_4px_0_#8dbff8]">
            <svg viewBox="0 0 24 24" className="h-6 w-6"><rect width="24" height="24" fill="url(#fade)" /></svg>
            <span className="-mt-[2px] ml-[9px]">Fill</span>
          </div>
          <div className="-ml-[2px] flex h-[42px] w-[208px] items-center rounded-t-md border-t-2 border-r-2 border-b-2 border-[#a9acaa] bg-linear-to-b from-[#e2e3e2] to-[#cbcccb] pl-[14px]">
            <svg viewBox="0 0 24 24" className="-mt-[3px] h-6 w-6"><rect x="1" y="1" width="22" height="22" fill="none" stroke="url(#inkfade)" strokeWidth="2" /></svg>
            <span className="-mt-[4px] ml-[10px] tracking-[.5px]">Stroke paint</span>
          </div>
          <div className="flex h-[42px] w-[200px] items-center rounded-t-md border-t-2 border-r-2 border-b-2 border-[#a9acaa] bg-linear-to-b from-[#e2e3e2] to-[#cbcccb] pl-[12px]">
            <svg viewBox="0 0 24 24" className="-mt-[3px] h-6 w-6" stroke="#000" strokeWidth="2">
              <path d="M0 5H20M0 23H24" /><path d="M0 14H24" strokeDasharray="4 1.5" /><path d="M18 1.5L24 5L18 8.5Z" fill="#000" stroke="none" />
            </svg>
            <span className="-mt-[4px] ml-[10px] tracking-[.4px]">Stroke style</span>
          </div>
        </div>
        <div className="h-[602px] w-[864px] border-2 border-[#a9acaa] bg-white">
          <div className="mt-[14px] flex h-[54px] items-center pl-5">
            <Cell>
              <svg viewBox="0 0 16 16" className="h-4 w-4"><path d="M2 1L14 15M14 1L2 15" stroke="#2a2a2a" strokeWidth="3" /></svg>
            </Cell>
            <Swatch fill="#a3b6cf" />
            <Swatch fill="url(#mix)" />
            <Swatch fill="url(#radial)" />
            <Swatch fill="#c6d4e6"><path d="M1 1H7L1 7ZM15 1H9L15 7ZM1 15H7L1 9ZM15 15H9L15 9Z" fill="#fff" /><path d="M3 8L8 4L13 8L8 12Z" fill="#fff" /><path d="M8 4V12M4 8H12" stroke="#8ea6c6" strokeWidth="1.600" /></Swatch>
            <Swatch fill="#bccbdf"><rect x="3" y="3" width="10" height="10" fill="#fff" /><path d="M3 13.5H13.5V3" stroke="#333" strokeWidth="1.2" /></Swatch>
            <Cell>
              <span className="text-[36px] leading-8 font-bold text-[#2a2a2a]">?</span>
            </Cell>
            <div className="ml-[334px] flex h-[54px] w-11 items-center justify-center rounded-md border-2 border-[#b5b8b5] bg-[#f2f2f0]">
              <svg viewBox="0 0 12 12" className="h-6 w-6">
                <path d={shieldPath} fill="#2a2a2a" /><path d={shieldPath} fill="url(#dark)" />
                <path d="M6 3.5Q9.500 5.5 7.8 9Q6 11 4.2 9Q2.5 5.5 6 3.5Z" fill="#fff" />
              </svg>
            </div>
            <svg viewBox="0 0 12 12" className="ml-[14px] h-6 w-6">
              <path d={shieldPath} fill="#2a2a2a" /><path d={shieldPath} fill="url(#dark)" />
            </svg>
          </div>
          <div className="mt-[15px] ml-[20px] leading-[34px] font-bold tracking-[.9px]">No objects</div>
        </div>
        <div className="mt-[8px]"><PercentField label="Blur (%)" value="0.0" /></div>
        <div className="mt-[10px]"><PercentField label="Opacity (%)" value="100.0" active /></div>
      </div>
      <div className="h-[2px] bg-white" />
    </div>
  );
}

/* ---------- palette ---------- */

const palette = (
  "000000 1a1a1a 333333 4d4d4d 666666 808080 999999 b3b3b3 cccccc e6e6e6 ececec f2f2f2 f9f9f9 ffffff " +
  "800000 ff0000 808000 ffff00 008000 00ff00 008080 00ffff 000080 0000ff 800080 ff00ff " +
  "2b0000 550000 800000 aa0000 d40000 ff0000 ff2a2a ff5555 ff8080 ffaaaa ffd5d5 " +
  "280b0b 501616 782121 a02c2c c83737 d35f5f de8787 e9afaf f4d7d7 241c1c 483737 6c5353 916f6f ac9393 c8b7b7 e3dbdb " +
  "2b1100 552200 803300 aa4400 d45500 ff6600 ff7f2a ff9955 ffb380 ffccaa ffe6d5 " +
  "28170b 502d16 784421 a05a2c c87137 d38d5f deaa87 e9c6af f4e3d7 241f1c 483e37 6c5d53 917c6f ac9d93 c8beb7 e3dedb " +
  "2b2200 554400 806600 aa8800 d4aa00 ffcc00 ffd42a ffdd55 ffe680 ffeeaa"
).split(" ");

const topStrip: [string, string][] = [
  ["w-[38px]", "bg-[#dcb894]"], ["w-[119px]", "bg-[#78bcd4]"], ["w-[116px]", "bg-[#dcb894]"], ["w-[119px]", "bg-[#78bcd4]"],
  ["w-[111px]", "bg-[#d8a898]"], ["w-[118px]", "bg-[#78bcd4]"], ["w-[46px]", "bg-[#b8847c]"], ["flex-1", "bg-[#d2d2d2]"],
];

const menus: [string, string][] = [
  ["File", "w-[66px]"], ["Edit", "w-[71px]"], ["View", "w-[81px]"], ["Layer", "w-[91px]"], ["Object", "w-[106px]"],
  ["Path", "w-[77px]"], ["Text", "w-[77px]"], ["Filters", "w-[96px]"], ["Extensions", "w-[150px]"], ["Help", "w-[60px]"],
];

const Defs = () => (
  <svg className="absolute h-0 w-0">
    <defs>
      <pattern id="chk" width="2" height="2" patternUnits="userSpaceOnUse">
        <rect width="2" height="2" fill="#1c1c1c" /><rect width="1" height="1" fill="#fff" /><rect x="1" y="1" width="1" height="1" fill="#fff" />
      </pattern>
      <mask id="stipple" maskUnits="userSpaceOnUse" x="-1" y="-1" width="20" height="20"><rect x="-1" y="-1" width="20" height="20" fill="url(#chk)" /></mask>
      <pattern id="dots" width="2" height="2" patternUnits="userSpaceOnUse">
        <rect width="1" height="1" fill="#4d5a6c" fillOpacity=".6" /><rect x="1" y="1" width="1" height="1" fill="#4d5a6c" fillOpacity=".6" />
      </pattern>
      <pattern id="dark" width="2" height="2" patternUnits="userSpaceOnUse">
        <rect width="1" height="1" fill="#777" /><rect x="1" y="1" width="1" height="1" fill="#777" />
      </pattern>
      <linearGradient id="paper" x1="0" y1="0" x2="1" y2="1"><stop offset="0" stopColor="#fff" /><stop offset="1" stopColor="#dededa" /></linearGradient>
      <linearGradient id="glass" x1="0" y1="0" x2="1" y2="1"><stop offset="0" stopColor="#f4f8fc" /><stop offset=".5" stopColor="#c9dcf0" /><stop offset="1" stopColor="#9fc2e6" /></linearGradient>
      <linearGradient id="blue" x1="0" y1="0" x2="1" y2="1"><stop offset="0" stopColor="#b0c9e6" /><stop offset="1" stopColor="#e2ebf5" /></linearGradient>
      <linearGradient id="blue2" x1="0" y1="0" x2="1" y2="1"><stop offset="0" stopColor="#f6fafc" /><stop offset="1" stopColor="#86abcd" /></linearGradient>
      <linearGradient id="fade" x1="0" y1="0" x2="1" y2="1"><stop offset="0" stopColor="#8fb2d6" /><stop offset="1" stopColor="#fdfeff" /></linearGradient>
      <linearGradient id="ink" x1="0" y1="0" x2="1" y2="1"><stop offset="0" stopColor="#000" /><stop offset="1" stopColor="#666" /></linearGradient>
      <linearGradient id="inkfade" gradientUnits="userSpaceOnUse" x1="0" y1="0" x2="24" y2="24"><stop offset="0" stopColor="#000" /><stop offset="1" stopColor="#000" stopOpacity="0" /></linearGradient>
      <linearGradient id="wave" x1="0" y1="0" x2="0" y2="1"><stop offset=".3" stopColor="#777" /><stop offset="1" stopColor="#e6e6e6" /></linearGradient>
      <linearGradient id="peach" x1="0" y1="0" x2="1" y2="1"><stop offset="0" stopColor="#fdeae2" /><stop offset="1" stopColor="#f1ac90" /></linearGradient>
      <linearGradient id="violet" x1="1" y1="0" x2="0" y2="1"><stop offset="0" stopColor="#c8c8e6" /><stop offset="1" stopColor="#6a6ab8" /></linearGradient>
      <linearGradient id="pink" x1="0" y1="0" x2="1" y2="1"><stop offset=".2" stopColor="#fff4f5" /><stop offset="1" stopColor="#ff9dab" /></linearGradient>
      <linearGradient id="yellow" x1="0" y1="0" x2="1" y2="1"><stop offset="0" stopColor="#fffdf0" /><stop offset="1" stopColor="#fbe04c" /></linearGradient>
      <linearGradient id="mix" x1="0" y1="0" x2="1" y2="0"><stop offset="0" stopColor="#b0c0d6" /><stop offset="1" stopColor="#fff" /></linearGradient>
      <radialGradient id="radial"><stop offset="0" stopColor="#eef3f8" /><stop offset="1" stopColor="#a9bbd3" /></radialGradient>
    </defs>
  </svg>
);

const desktopRows = ["o", "n", "n", "a", "a", "n", "a", "n", "", "", "", "o", "e", "e"];

export default function App() {
  return (
    <div className="relative flex h-[1284px] w-[2404px] overflow-hidden bg-[#d2d2d2] font-['Noto_Sans',sans-serif] text-[24px] leading-none whitespace-nowrap text-[#2e3436]">
      <Defs />
      <div className="flex w-[2396px] shrink-0 flex-col">
        <div className="flex h-1 shrink-0">
          {topStrip.map(([w, c], i) => (
            <div key={i} className={`${w} ${c}`} />
          ))}
        </div>
        <div className="flex flex-1 flex-col rounded-t-xl bg-[#ededed]">
          {/* title bar */}
          <div className="flex h-[42px] shrink-0 items-center rounded-t-xl bg-linear-to-b from-[#ebebeb] to-[#d2d2d2] shadow-[inset_0_2px_0_#f6f6f6]">
            <div className="flex w-[964px] gap-4 pl-[14px]">
              <div className="h-6 w-6 rounded-full border-2 border-[#e2463f] bg-[#fc615c]" />
              <div className="h-6 w-6 rounded-full border-2 border-[#e0a135] bg-[#fdbc40]" />
              <div className="h-6 w-6 rounded-full border-2 border-[#23a92f] bg-[#34c84a]" />
            </div>
            <div className="flex h-7 w-[29px] items-center justify-center border-2 border-[#bdbdbd] bg-[#f2f2f2]">
              <svg viewBox="0 0 20 22" className="h-[22px] w-5" fill="none">
                <path d="M4 1L16 21" stroke="#444" strokeWidth="4" /><path d="M16 1L4 21" stroke="#666" strokeWidth="1.6" />
              </svg>
            </div>
            <span className="ml-[13px] font-['Inter',sans-serif] text-[25px] leading-[30px] tracking-[.34px] text-black">fletchstar3.svg (outline) - Inkscape</span>
          </div>
          {/* menu bar */}
          <div className="flex h-[42px] shrink-0 items-center pl-[12px]">
            {menus.map(([m, w]) => (
              <span key={m} className={w}>{m}</span>
            ))}
          </div>
          {/* commands */}
          <div className="flex h-[72px] shrink-0 items-center pl-[6px]">
            <Cell><NewIcon /></Cell><Cell><OpenIcon /></Cell><Cell><SaveIcon /></Cell><Cell><PrintIcon /></Cell><Sep />
            <Cell><ImportIcon /></Cell><Cell><ExportIcon /></Cell><Sep />
            <Cell><UndoIcon /></Cell><Cell><RedoIcon /></Cell><Sep />
            <Cell><CopyIcon /></Cell><Cell><CutIcon /></Cell><Cell><PasteIcon /></Cell><Sep />
            <Cell><ZoomSel /></Cell><Cell><ZoomDraw /></Cell><Cell><ZoomPage /></Cell><Sep />
            <Cell><Dup /></Cell><Cell><Dup><Lock color="#f5b51c" /></Dup></Cell><Cell><Dup><Lock color="#6fa83a" open /></Dup></Cell><Sep />
            <Cell><Group /></Cell><Cell><Group un /></Cell><Sep />
            <Cell><FillStroke /></Cell><Cell><TextIcon /></Cell><Cell><Ic><Layers /></Ic></Cell><Cell><XmlIcon /></Cell><Cell><AlignIcon /></Cell><Sep />
            <Cell><DocPrefs /></Cell><Cell><Prefs /></Cell>
          </div>
          {/* tool controls */}
          <div className="flex h-[72px] shrink-0 items-center pb-[1px] pl-[6px]">
            <Cell><SelAll /></Cell><Cell><SelLayers /></Cell><Cell><Desel /></Cell><Sep />
            <Cell><RotL /></Cell><Cell><RotR /></Cell><Cell><FlipH /></Cell><Cell><FlipV /></Cell><Sep />
            <Cell><Stack bars={[[9, 1, 6.5], [9, 4, 6.5], [9, 7, 6.5], [9, 10, 6.5]]} gold={[0.5, 12.6, 15]} arrow="M3.5 0V8" head="M1 7H6L3.5 10.5Z" /></Cell>
            <Cell><Stack bars={[[9, 1, 6.5], [6, 4, 9.5], [9, 7, 6.5], [9, 15, 6.5], [9, 12.8, 6.5]]} gold={[0.5, 9.4, 15]} arrow="M6.5 3.5Q2.5 3 2.5 6" head="M.2 5H5L2.6 8Z" /></Cell>
            <Cell><Stack bars={[[0.5, 1, 6.5], [0.5, 7, 7], [0.5, 10, 6.5], [0.5, 13, 6.5]]} gold={[0.5, 3.3, 15]} arrow="M8.5 12Q13.5 13 13.5 10" head="M11 11H16L13.5 7.5Z" /></Cell>
            <Cell><Stack bars={[[0.5, 5, 6], [0.5, 8, 6], [0.5, 11, 6], [0.5, 14.5, 6]]} gold={[0.5, 0.6, 15]} arrow="M13 15V6" head="M10.5 8H15.5L13 4.5Z" /></Cell>
            <Sep />
            <div className="flex items-center pl-4">
              <NumberField label="X:" lw="w-[30px]" value="0.000" width="w-[122px]" />
              <div className="w-[17px]" />
              <NumberField label="Y:" lw="w-[31px]" value="0.000" width="w-[122px]" />
              <div className="w-[15px]" />
              <NumberField label="W:" lw="w-[37px]" value="0.000" width="w-[122px]" />
              <div className="flex w-[73px] pl-[18px]"><Padlock /></div>
              <NumberField label="H:" lw="w-[32px]" value="0.000" width="w-[122px]" />
            </div>
            <div className="ml-[2px] flex h-[46px] w-[84px] items-center rounded-md border-2 border-[#b2b5b2] bg-linear-to-b from-[#fafafa] to-[#dcdcdc] pl-[8px] text-[20px]">
              <span className="w-[43px]">px</span>
              <Chevron d="M2 4L10 14L18 4" cls="h-[18px] w-[18px]" />
            </div>
            <div className="ml-[13px] h-9 w-[2px] bg-[#b3b5b3]" />
            <div className="ml-[14px] flex gap-1">
              {affectIcons.map((icon, i) => (
                <Pressed key={i}>{icon}</Pressed>
              ))}
            </div>
          </div>
          {/* work area */}
          <div className="flex h-[942px] shrink-0">
            <div className="flex w-20 shrink-0 flex-col pt-2 pl-2">
              <div className="flex h-[61px] w-[60px] shrink-0 items-center justify-center rounded-md border-2 border-[#b5b8b5] border-t-[#a3a7a3] bg-linear-to-b from-[#a5a9a5] via-[#bcbfbc] to-[#dcdddc]">
                <svg viewBox="0 0 24 24" className="h-12 w-12">
                  <path d="M6 2V20.5L9.5 17L12 22.5L15.4 21L13 15.5H17.5Z" fill="#000" stroke="#fff" strokeWidth=".8" />
                </svg>
              </div>
              <div className="h-[2px]" />
              {tools}
              <div className="flex h-[98px] w-[60px] items-center justify-center"><Chevron d="M4 2L14 10L4 18" cls="h-[18px] w-[18px]" /></div>
            </div>
            <div className="grid w-[1304px] shrink-0 grid-cols-[28px_1242px_34px] grid-rows-[28px_874px_40px]">
              <div />
              <HRuler />
              <div className="pt-[6px] pl-[6px]">
                <svg viewBox="0 0 26 26" className="h-[27px] w-[27px]" fill="none">
                  <path d="M17 17L24 24" stroke="#777" strokeWidth="4" />
                  <circle cx="10.5" cy="10.5" r="9" fill="#f4f4f4" stroke="#666" strokeWidth="2" />
                  <path d="M7.5 6.5V14.5M13.5 6.5V14.5M6 7.5L7.5 6.5M12 7.5L13.5 6.5" stroke="#555" strokeWidth="1.6" />
                  <path d="M10.500 8V9.6M10.5 12V13.6" stroke="#555" strokeWidth="1.6" />
                </svg>
              </div>
              <VRuler />
              <Canvas />
              <div className="pt-[12px] pl-[6px]">
                <div className="h-[862px] w-[26px] bg-[#d6d6d6] px-[6px] pt-[212px]">
                  <div className="h-[438px] w-[14px] rounded-full bg-[#9c9d9f]" />
                </div>
              </div>
              <div />
              <div className="pt-[6px]">
                <div className="h-[26px] bg-[#d6d6d6] pt-[6px] pl-[166px]">
                  <div className="h-[14px] w-[910px] rounded-full bg-[#9c9d9f]" />
                </div>
              </div>
              <div className="pt-2 pl-[7px]">
                <svg viewBox="0 0 12 12" className="h-6 w-6">
                  <path d="M1 0L11 7.5L3.500 12Q.5 6 1 0Z" fill="#a8a8a8" />
                  <g mask="url(#stipple)">
                    <path d="M1 .5L6 5L3 7.5L1 5Z" fill="#12b012" />
                    <path d="M1.500 6L5 6L4.500 9L2 9Z" fill="#1a90a8" />
                    <path d="M6 4.500L10.500 7.500L6.500 9L5 7Z" fill="#b01820" />
                    <path d="M2.500 9L6.5 8.5L5.500 10.500L3.600 11.600Z" fill="#2a0ac0" />
                  </g>
                </svg>
              </div>
            </div>
            <div className="flex w-4 shrink-0 flex-col items-center gap-1 pt-[447px] pl-[2px]">
              {Array.from({ length: 8 }, (_, i) => (
                <div key={i} className="h-[2px] w-[3px] shrink-0 bg-[#b4b4b4]" />
              ))}
            </div>
            <Panel />
            <div className="w-[26px] shrink-0 bg-[#d6d6d6] px-[6px] pt-[5px]">
              <div className="h-[555px] w-[14px] rounded-full bg-[#9c9d9f]" />
            </div>
            <SnapBar />
          </div>
          {/* palette */}
          <div className="flex h-8 shrink-0">
            <div className="flex h-[30px] w-[2372px] border-t-2 border-b-2 border-t-[#a0a2a0] border-b-white bg-white">
              <svg viewBox="0 0 26 26" className="h-[26px] w-[26px] shrink-0" stroke="#7a0c0c" strokeWidth="2"><path d="M0 0L26 26M26 0L0 26" /></svg>
              {palette.map((c, i) => (
                <div key={i} className="h-[26px] w-[26px] shrink-0" style={{ backgroundColor: `#${c}` }} />
              ))}
              <div className="h-[26px] w-1 bg-[#fff6d5]" />
            </div>
            <div className="flex items-center pb-[6px] pl-[3px]"><Chevron d="M16 2L6 10L16 18" cls="h-[18px] w-[18px]" /></div>
          </div>
          <div className="h-[26px] w-[2372px] shrink-0 bg-[#d6d6d6] pt-[6px] pl-1">
            <div className="h-[14px] w-[488px] rounded-full bg-[#9c9d9f]" />
          </div>
          {/* status bar */}
          <div className="flex h-[52px] shrink-0 overflow-hidden">
            <div className="w-[138px] pt-[3px] pl-[3px] text-[20px] leading-[24px]">
              <div>Fill:</div>
              <div>Stroke:</div>
            </div>
            <div className="w-[114px] pt-[3px] pl-[3px] text-[20px] leading-[24px] tracking-[1.2px]">
              <div>N/A</div>
              <div>N/A</div>
            </div>
            <div className="flex w-[28px] items-center text-[20px]">O:</div>
            <div className="mt-1 flex h-[46px] w-[94px] items-center rounded-md border-2 border-[#b2b5b2] bg-[#f3f3f1]">
              <span className="flex-1 pl-[9px] text-[21px] text-[#b4b5b3]">0</span>
              <Spin tone="#b8bab8" />
            </div>
            <div className="mt-1 ml-[4px] w-[2px] bg-[#b3b5b3]" />
            <div className="flex w-[76px] items-center gap-[15px] pl-[8px]">
              <svg viewBox="0 0 12 12" className="h-6 w-6" fill="none">
                <g mask="url(#stipple)">
                  <path d="M0 5Q6 1.500 12 6Q10 11 6 11Q2 11 0 5Z" fill="#111" />
                </g>
                <path d="M1 2.5L3 4.800M3.8 1.5L5 4M6.8 1.200V4M9.5 1.8L8.5 4.5" stroke="#333" strokeWidth=".9" />
                <path d="M0 5.500Q5 3 11 6" stroke="#333" strokeWidth=".8" />
              </svg>
              <Padlock dim />
            </div>
            <div className="mt-1 flex h-[46px] w-[128px] items-center rounded-md border-2 border-[#b2b5b2] bg-linear-to-b from-[#fafafa] to-[#dcdcdc] pl-[21px] text-[21px]">
              <span className="w-[74px]">(root)</span>
              <Chevron d="M2 4L10 14L18 4" cls="h-[18px] w-[18px]" />
            </div>
            <span className="w-[1495px] pt-[2px] pl-[11px] leading-[48px] tracking-[.77px]">
              No objects selected. Click, Shift+click, Alt+scroll mouse on top of objects, or drag around objects to select.
            </span>
            <div className="mt-1 ml-[10px] w-[2px] bg-[#b3b5b3]" />
            <div className="w-[37px] pt-[1px] pl-[5px] text-[20px] leading-[25px]">
              <div>X:</div>
              <div>Y:</div>
            </div>
            <div className="w-[92px] pl-[3px] font-['DejaVu_Sans_Mono',monospace] text-[20px] leading-[25px]">
              <div>405.00</div>
              <div>610.93</div>
            </div>
            <div className="flex w-[25px] items-center text-[20px]">Z:</div>
            <div className="mt-[3px] flex h-[46px] w-[112px] items-center rounded-md border-2 border-[#aeb1ae] bg-white">
              <span className="flex-1 text-center text-[21px] tracking-[-.5px]">44%</span>
              <Spin tone="#8b8e89" />
            </div>
            <div className="mt-[22px] ml-[8px] h-[30px] flex-1 border-t-2 border-l-2 border-[#dedede] bg-white">
              <svg viewBox="0 0 28 28" className="h-7 w-7" stroke="#888" strokeWidth="2"><path d="M4 28L28 4M12 28L28 12M20 28L28 20" /></svg>
            </div>
          </div>
        </div>
      </div>
      {/* desktop behind the window */}
      <div className="flex w-2 shrink-0 flex-col overflow-hidden shadow-[inset_4px_0_4px_-1px_#0008]">
        <div className="h-[28px] shrink-0 bg-[#e6e6e6]" />
        <div className="h-[65px] shrink-0 bg-[#555]" />
        <div className="h-[394px] shrink-0 bg-linear-to-r from-[#777] to-[#b4b4b4]" />
        <div className="h-[97px] shrink-0 bg-linear-to-r from-[#333] to-[#505050]" />
        <div className="h-[36px] shrink-0 bg-[#c9c9c9]" />
        {desktopRows.map((c, i) => (
          <div key={i} className={`flex h-[38px] shrink-0 items-center justify-end overflow-hidden text-[24px] text-[#555] ${i % 2 ? "bg-[#c4c4c4]" : "bg-[#b8b8b8]"}`}>
            <span>{c}</span>
          </div>
        ))}
        <div className="flex-1 bg-[#262a38]" />
      </div>
    </div>
  );
}
